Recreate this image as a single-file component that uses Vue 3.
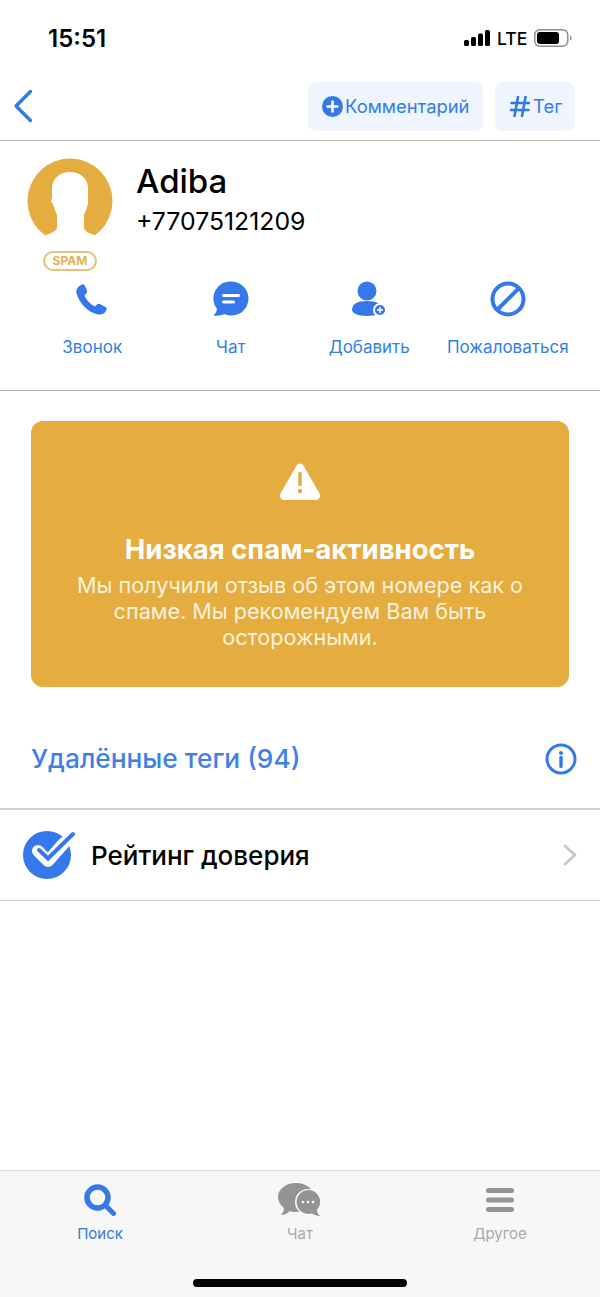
<script setup>
const actions = [
  { key: 'call', label: 'Звонок' },
  { key: 'chat', label: 'Чат' },
  { key: 'add', label: 'Добавить' },
  { key: 'report', label: 'Пожаловаться' }
]
</script>

<template>
  <div class="page">
    <div class="status">
      <span class="time">15:51</span>
      <div class="status-right">
        <svg class="signal" width="26" height="16" viewBox="0 0 26 16">
          <rect x="0" y="10" width="5" height="6" rx="1.5" />
          <rect x="7" y="7" width="5" height="9" rx="1.5" />
          <rect x="14" y="3.5" width="5" height="12.5" rx="1.5" />
          <rect x="21" y="0" width="5" height="16" rx="1.5" />
        </svg>
        <span class="lte">LTE</span>
        <svg class="battery" width="38" height="18" viewBox="0 0 38 18">
          <rect class="batt-frame" x="0.75" y="0.75" width="33" height="16.5" rx="5" />
          <rect x="3" y="3" width="22" height="12" rx="3" />
          <path class="batt-tip" d="M36 6.5c1.2.4 1.7 1.3 1.7 2.5s-.5 2.1-1.7 2.5z" />
        </svg>
      </div>
    </div>

    <div class="nav">
      <svg class="back" width="20" height="34" viewBox="0 0 20 34">
        <path d="M17.5 2.5 3 17l14.5 14.5" />
      </svg>
      <div class="nav-buttons">
        <div class="pill pill-comment">
          <svg width="21" height="21" viewBox="0 0 21 21">
            <circle class="fill-blue" cx="10.5" cy="10.5" r="10.5" />
            <path class="plus-line" d="M10.5 5.5v10M5.5 10.5h10" />
          </svg>
          <span>Комментарий</span>
        </div>
        <div class="pill pill-tag">
          <svg width="20" height="21" viewBox="0 0 20 21">
            <path class="hash-line" d="M8 1 4.5 20M15.5 1 12 20M1.5 7h18M.5 14h18" />
          </svg>
          <span>Тег</span>
        </div>
      </div>
    </div>

    <section class="profile">
      <div class="who">
        <div class="avatar-col">
          <svg class="avatar" width="86" height="86" viewBox="0 0 86 86">
            <circle class="fill-amber" cx="43" cy="43" r="42.5" />
            <path class="fill-white" d="M43 14C33 14 26 20 25 29v10l-1 5 2 2c1 4 3 8 4 11v12c0 3-4 6-14 9v10h52V77c-8-2-11-5-11-8V56c2-3 3-6 4-11V29C60 20 53 14 43 14z" />
          </svg>
          <span class="spam">SPAM</span>
        </div>
        <div class="who-text">
          <div class="name">Adiba</div>
          <div class="phone">+77075121209</div>
        </div>
      </div>

      <div class="actions">
        <div v-for="a in actions" :key="a.key" class="action">
          <div class="action-icon">
            <svg v-if="a.key === 'call'" width="32" height="32" viewBox="0 0 32 32">
              <path class="fill-blue" d="M6 1.5c1.500-.5 2.500.3 3 1.500l2 4.500c.5 1.500 0 2.500-1 3.500L8.500 12.500c1.500 4 6 9 10.500 11l2-2c1-1 2-1 3-.5l5.500 3c1.500 1 1.500 2.500.5 4-2 3-5 4-8 3.500-10-2-19-11.500-21.500-21.500C-.3 6.500 2 3 6 1.500z" />
            </svg>
            <svg v-else-if="a.key === 'chat'" width="36" height="36" viewBox="0 0 36 36">
              <path class="fill-blue" d="M18.5.5a17 17 0 1 1-7 32.500C8 34.500 4 35 .5 34.500c2-2 3.200-4 3.500-6.500A17 17 0 0 1 18.500.5z" />
              <path class="chat-line" d="M10.5 14.500h15M10.5 21h10" />
            </svg>
            <svg v-else-if="a.key === 'add'" width="36" height="36" viewBox="0 0 36 36">
              <circle class="fill-blue" cx="16" cy="10" r="9.5" />
              <path class="fill-blue" d="M1 29c0-6 5-9 15-9s15 3 15 9c0 3-6 6-15 6S1 32 1 29z" />
              <circle class="fill-white" cx="29" cy="29" r="7" />
              <circle class="fill-blue" cx="29" cy="29" r="5" />
              <path class="badge-plus" d="M29 26v6M26 29h6" />
            </svg>
            <svg v-else width="36" height="36" viewBox="0 0 36 36">
              <circle class="block-line" cx="18" cy="18" r="15.5" />
              <path class="block-line" d="M29 7 7 29" />
            </svg>
          </div>
          <span class="action-label">{{ a.label }}</span>
        </div>
      </div>
    </section>

    <section class="warn-wrap">
      <div class="warn">
        <svg width="42" height="38" viewBox="0 0 42 38">
          <path class="fill-white" d="M17.5 2.5c1.600-2.800 5.400-2.800 7 0l16 28c1.600 2.900-.3 6.500-3.500 6.500H5c-3.200 0-5.100-3.600-3.500-6.500z" />
          <path class="warn-mark" d="M21 10.5v11" />
          <circle class="fill-amber" cx="21" cy="28" r="2.2" />
        </svg>
        <h2 class="warn-title">Низкая спам-активность</h2>
        <p class="warn-text">Мы получили отзыв об этом номере как о спаме. Мы рекомендуем Вам быть осторожными.</p>
      </div>
    </section>

    <div class="tags">
      <span>Удалённые теги (94)</span>
      <svg width="32" height="32" viewBox="0 0 32 32">
        <circle class="info-ring" cx="16" cy="16" r="14" />
        <circle class="fill-blue" cx="16" cy="10" r="2" />
        <path class="info-stem" d="M16 14.5v9" />
      </svg>
    </div>

    <div class="rating">
      <svg width="54" height="48" viewBox="0 0 54 48">
        <circle class="fill-blue" cx="24" cy="24" r="24" />
        <path class="check-outer" d="m15 20 10 10 16-18" />
        <path class="check-inner" d="m16 19 9 8.500L50 3" />
      </svg>
      <span class="rating-text">Рейтинг доверия</span>
      <svg class="chevron" width="16" height="22" viewBox="0 0 16 22">
        <path d="m3 2 10 9-10 9" />
      </svg>
    </div>

    <div class="spacer"></div>

    <footer class="tabbar">
      <div class="tabs">
        <div class="tab tab-active">
          <svg width="32" height="32" viewBox="0 0 32 32">
            <circle class="search-ring" cx="13.5" cy="13.5" r="10.5" />
            <path class="search-handle" d="m22 22 7.500 7.500" />
          </svg>
          <span>Поиск</span>
        </div>
        <div class="tab">
          <svg width="46" height="34" viewBox="0 0 46 34">
            <path class="fill-grey" d="M19 0c10 0 18 6 18 14s-8 15-18 15c-2 0-4 0-6-1-2 2-5 4-9 4 2-2 3-5 3-7-4-3-6-7-6-11C1 6 9 0 19 0z" />
            <circle class="chat-front" cx="31" cy="19" r="13" />
            <path class="fill-grey" d="M31 7a12 12 0 0 1 9 20c0 2 1 4 3 6-3 0-6-1-8-2.500A12 12 0 1 1 31 7z" />
            <circle class="fill-tabbar" cx="26" cy="19" r="1.3" />
            <circle class="fill-tabbar" cx="31" cy="19" r="1.3" />
            <circle class="fill-tabbar" cx="36" cy="19" r="1.3" />
          </svg>
          <span>Чат</span>
        </div>
        <div class="tab">
          <svg width="30" height="32" viewBox="0 0 30 32">
            <rect class="fill-grey" x="1" y="4" width="28" height="5" rx="2.5" />
            <rect class="fill-grey" x="1" y="13.5" width="28" height="5" rx="2.5" />
            <rect class="fill-grey" x="1" y="23" width="28" height="5" rx="2.5" />
          </svg>
          <span>Другое</span>
        </div>
      </div>
      <div class="home-bar"></div>
    </footer>
  </div>
</template>

<style scoped>
.page {
  width: 600px;
  height: 1297px;
  display: flex;
  flex-direction: column;
  background: #fff;
  font-family: Inter, "Noto Sans", sans-serif;
  color: #000;
  overflow: hidden;
}

.fill-blue { fill: #3478ec; }
.fill-amber { fill: #e5ac3f; }
.fill-white { fill: #fff; }
.fill-grey { fill: #949494; }
.fill-tabbar { fill: #f7f7f7; }

/* status bar */
.status {
  height: 82px;
  box-sizing: border-box;
  padding: 23px 28px 0 48px;
  display: flex;
  justify-content: space-between;
  align-items: flex-start;
}
.time {
  font-size: 24px;
  line-height: 32px;
  font-weight: 600;
}
.status-right {
  display: flex;
  align-items: center;
  height: 30px;
  gap: 7px;
}
.signal { fill: #000; }
.lte {
  font-size: 17.5px;
  font-weight: 500;
  width: 29px;
}
.battery { fill: #000; margin-left: 1px; }
.batt-frame { fill: none; stroke: #8e8e8e; stroke-width: 1.5; }
.batt-tip { fill: #8e8e8e; }

/* nav */
.nav {
  height: 59px;
  box-sizing: border-box;
  padding: 0 25px 10px 13px;
  border-bottom: 1px solid #b4b4b4;
  display: flex;
  justify-content: space-between;
  align-items: center;
}
.back { fill: none; stroke: #3478ec; stroke-width: 3.4; stroke-linecap: round; stroke-linejoin: round; }
.nav-buttons { display: flex; gap: 12px; }
.pill {
  height: 49px;
  box-sizing: border-box;
  border-radius: 8px;
  background: #f0f5fd;
  color: #2f7fe6;
  display: flex;
  align-items: center;
  font-size: 18.4px;
}
.pill-comment { width: 175px; padding-left: 14px; gap: 2px; }
.pill-tag { width: 80px; padding-left: 15px; gap: 3px; }
.plus-line { stroke: #fff; stroke-width: 2.6; stroke-linecap: round; }
.hash-line { stroke: #3478ec; stroke-width: 2.6; fill: none; stroke-linecap: round; }

/* profile */
.profile {
  height: 250px;
  box-sizing: border-box;
  border-bottom: 1px solid #b4b4b4;
}
.who {
  display: flex;
  padding: 17px 0 0 27px;
  height: 140px;
  box-sizing: border-box;
}
.avatar-col {
  width: 86px;
  display: flex;
  flex-direction: column;
  align-items: center;
}
.avatar { flex-shrink: 0; }
.spam {
  margin-top: 7px;
  width: 54px;
  height: 20px;
  flex-shrink: 0;
  box-sizing: border-box;
  border: 2px solid #e6c27a;
  border-radius: 10px;
  color: #e0b35a;
  font-size: 12px;
  font-weight: 700;
  line-height: 16px;
  text-align: center;
}
.who-text { margin-left: 23px; }
.name {
  font-size: 33px;
  line-height: 46px;
  font-weight: 450;
}
.phone {
  font-size: 24.8px;
  line-height: 35px;
}
.actions {
  display: grid;
  grid-template-columns: repeat(4, 138.5px);
  padding-left: 23px;
}
.action {
  display: flex;
  flex-direction: column;
  align-items: center;
}
.action-icon {
  height: 36px;
  display: flex;
  align-items: center;
  justify-content: center;
}
.action-label {
  margin-top: 18px;
  font-size: 17px;
  line-height: 24px;
  color: #2f7fe6;
  white-space: nowrap;
}
.chat-line { stroke: #fff; stroke-width: 3; stroke-linecap: round; fill: none; }
.badge-plus { stroke: #fff; stroke-width: 1.6; fill: none; }
.block-line { stroke: #3478ec; stroke-width: 4; fill: none; }

/* warning card */
.warn-wrap {
  padding: 30px 31px 0;
}
.warn {
  height: 266px;
  box-sizing: border-box;
  padding-top: 42px;
  border-radius: 12px;
  background: #e5ac3f;
  color: #fff;
  display: flex;
  flex-direction: column;
  align-items: center;
  text-align: center;
}
.warn-mark { stroke: #e5ac3f; stroke-width: 3.5; stroke-linecap: round; }
.warn-title {
  margin: 31px 0 0;
  font-size: 27.5px;
  line-height: 34px;
  font-weight: 700;
}
.warn-text {
  margin: 6px 0 0;
  width: 480px;
  font-size: 21.6px;
  line-height: 26px;
  color: #fcf2de;
}

/* tags */
.tags {
  height: 123px;
  box-sizing: border-box;
  padding: 22px 23px 0 31px;
  border-bottom: 2px solid #cfcfcf;
  display: flex;
  justify-content: space-between;
  align-items: center;
  color: #3f80e8;
  font-size: 26.3px;
  font-weight: 450;
}
.info-ring { fill: none; stroke: #3478ec; stroke-width: 3; }
.info-stem { stroke: #3478ec; stroke-width: 3.4; stroke-linecap: round; }

/* rating */
.rating {
  height: 91px;
  box-sizing: border-box;
  padding: 0 22px 0 23px;
  border-bottom: 1px solid #c9c9c9;
  display: flex;
  align-items: center;
}
.rating-text {
  margin-left: 14px;
  font-size: 26px;
  font-weight: 450;
  flex: 1;
}
.check-outer { fill: none; stroke: #fff; stroke-width: 12; stroke-linecap: round; stroke-linejoin: round; }
.check-inner { fill: none; stroke: #3478ec; stroke-width: 4; stroke-linecap: round; stroke-linejoin: miter; }
.chevron { fill: none; stroke: #c7c7c7; stroke-width: 2.8; stroke-linecap: round; stroke-linejoin: round; }

.spacer { flex: 1; }

/* tab bar */
.tabbar {
  height: 127px;
  box-sizing: border-box;
  border-top: 1px solid #d8d8d8;
  background: #f7f7f7;
  display: flex;
  flex-direction: column;
}
.tabs {
  display: grid;
  grid-template-columns: repeat(3, 200px);
  padding-top: 12px;
}
.tab {
  display: flex;
  flex-direction: column;
  align-items: center;
  color: #a9a9a9;
  font-size: 15px;
  line-height: 22px;
}
.tab svg { height: 34px; display: block; margin-bottom: 6px; }
.tab-active { color: #3478d8; }
.search-ring { fill: none; stroke: #3478ec; stroke-width: 5.5; }
.search-handle { stroke: #3478ec; stroke-width: 5; stroke-linecap: round; }
.chat-front { fill: #f7f7f7; }
.home-bar {
  margin: 34px auto 0;
  width: 214px;
  height: 8px;
  border-radius: 4px;
  background: #000;
}
</style>
